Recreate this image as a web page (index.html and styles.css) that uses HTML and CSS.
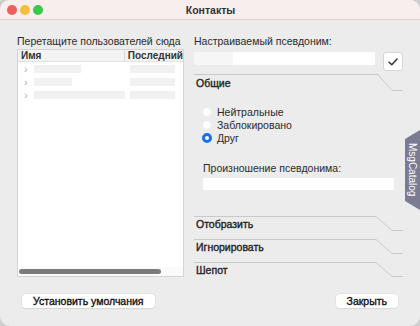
FILE: index.html
```html
<!DOCTYPE html>
<html>
<head>
<meta charset="utf-8">
<link rel="stylesheet" href="styles.css">
</head>
<body>
<div class="window">
  <div class="titlebar">
    <div class="lights">
      <span class="light red"></span>
      <span class="light yellow"></span>
      <span class="light green"></span>
    </div>
    <div class="title">Контакты</div>
  </div>
  <div class="content">
    <div class="main">
      <div class="left">
        <div class="label">Перетащите пользователей сюда</div>
        <div class="list">
          <div class="list-head">
            <div class="col-name">Имя</div>
            <div class="col-last">Последний</div>
          </div>
          <div class="row"><span class="chev">›</span><span class="bar b1"></span><span class="bar b4"></span></div>
          <div class="row"><span class="chev">›</span><span class="bar b2"></span><span class="bar b4"></span></div>
          <div class="row"><span class="chev">›</span><span class="bar b3"></span><span class="bar b4"></span></div>
          <div class="list-fill"></div>
          <div class="scroll"><span class="thumb"></span></div>
        </div>
      </div>
      <div class="right">
        <div class="label">Настраиваемый псевдоним:</div>
        <div class="alias-row">
          <div class="input alias"><span class="ph"></span></div>
          <div class="check">
            <svg width="10" height="8" viewBox="0 0 10 8"><path d="M1 4.2 L3.8 6.8 L9 1" fill="none" stroke="#333" stroke-width="1.5" stroke-linecap="round" stroke-linejoin="round"/></svg>
          </div>
        </div>
        <div class="tab first">
          <div class="tab-label">Общие</div>
          <svg class="tab-edge" width="28" height="17" viewBox="0 0 28 17"><path d="M0 0.5 L3 0.5 L17 16.5 L28 16.5" fill="none" stroke="#c9c9c9" stroke-width="1"/></svg>
        </div>
        <div class="general">
          <div class="radios">
            <div class="radio-row"><span class="radio"></span>Нейтральные</div>
            <div class="radio-row"><span class="radio"></span>Заблокировано</div>
            <div class="radio-row"><span class="radio on"></span>Друг</div>
          </div>
          <div class="label pron">Произношение псевдонима:</div>
          <div class="input pron-input"></div>
        </div>
        <div class="tab">
          <div class="tab-label">Отобразить</div>
          <svg class="tab-edge" width="28" height="15" viewBox="0 0 28 15"><path d="M0 0.5 L1 0.5 L17 14.5 L28 14.5" fill="none" stroke="#c9c9c9" stroke-width="1"/></svg>
        </div>
        <div class="tab">
          <div class="tab-label">Игнорировать</div>
          <svg class="tab-edge" width="28" height="15" viewBox="0 0 28 15"><path d="M0 0.5 L1 0.5 L17 14.5 L28 14.5" fill="none" stroke="#c9c9c9" stroke-width="1"/></svg>
        </div>
        <div class="tab">
          <div class="tab-label">Шепот</div>
          <svg class="tab-edge" width="28" height="15" viewBox="0 0 28 15"><path d="M0 0.5 L1 0.5 L17 14.5 L28 14.5" fill="none" stroke="#c9c9c9" stroke-width="1"/></svg>
        </div>
      </div>
    </div>
    <div class="buttons">
      <div class="btn">Установить умолчания</div>
      <div class="btn">Закрыть</div>
    </div>
  </div>
  <div class="side-tab"><span>MsgCatalog</span></div>
</div>
</body>
</html>
```

FILE: styles.css
```css
* { box-sizing: border-box; }
html, body { margin: 0; padding: 0; }
body {
  width: 420px;
  height: 326px;
  background: #cfcfcf;
  font-family: "Liberation Sans", Arial, sans-serif;
  font-size: 10.5px;
  color: #222;
  overflow: hidden;
}
.window {
  position: relative;
  width: 420px;
  height: 326px;
  background: #ececec;
  border-radius: 10px;
  overflow: hidden;
  display: flex;
  flex-direction: column;
}
.titlebar {
  height: 20px;
  background: #f8eeee;
  border-bottom: 1px solid #dcd6d6;
  display: flex;
  align-items: center;
  position: relative;
  flex-shrink: 0;
}
.lights {
  display: flex;
  gap: 3px;
  padding-left: 7px;
}
.light {
  width: 10px;
  height: 10px;
  border-radius: 50%;
  display: block;
}
.red { background: #ec5f5a; }
.yellow { background: #f5be3f; }
.green { background: #3ac84a; }
.title {
  flex: 1;
  text-align: center;
  font-weight: bold;
  font-size: 10.5px;
  color: #333;
  margin-right: 42px;
}
.content {
  flex: 1;
  display: flex;
  flex-direction: column;
  padding: 14px 17px 0 17px;
}
.main {
  display: flex;
  gap: 10px;
  height: 243px;
}
.left {
  width: 167px;
  display: flex;
  flex-direction: column;
}
.label {
  height: 15px;
  line-height: 15px;
  color: #2a2a2a;
  white-space: nowrap;
}
.list {
  flex: 1;
  background: #fff;
  border: 1px solid #d4d4d4;
  display: flex;
  flex-direction: column;
  overflow: hidden;
}
.list-head {
  display: flex;
  height: 12px;
  line-height: 12px;
  background: #f3f3f3;
  border-bottom: 1px solid #e2e2e2;
  font-weight: bold;
  font-size: 10px;
  color: #333;
}
.col-name {
  width: 111px;
  padding-left: 3px;
  border-right: 1px solid #d8d8d8;
}
.col-last {
  padding-left: 3px;
  white-space: nowrap;
}
.row {
  display: flex;
  align-items: center;
  height: 13px;
}
.chev {
  width: 16px;
  padding-left: 6px;
  color: #b0b0b0;
  font-size: 11px;
  line-height: 10px;
}
.bar {
  display: block;
  height: 8px;
  background: #f1f1f1;
}
.b1 { width: 47px; margin-right: 49px; }
.b2 { width: 38px; margin-right: 58px; }
.b3 { width: 91px; margin-right: 5px; }
.b4 { width: 45px; }
.list-fill { flex: 1; }
.scroll {
  height: 9px;
  padding: 2px 22px 2px 1px;
  background: #fafafa;
}
.thumb {
  display: block;
  height: 5px;
  border-radius: 3px;
  background: #7b7b7b;
}
.right {
  flex: 1;
  display: flex;
  flex-direction: column;
}
.alias-row {
  display: flex;
  align-items: flex-start;
  gap: 8px;
  margin-top: 3px;
  height: 20px;
}
.input {
  height: 13px;
  background: #fff;
}
.alias {
  width: 181px;
  display: flex;
}
.ph {
  display: block;
  width: 39px;
  background: #f6f6f6;
}
.check {
  width: 20px;
  height: 19px;
  background: #fff;
  border: 1px solid #d6d6d6;
  border-radius: 3px;
  display: flex;
  align-items: center;
  justify-content: center;
}
.tab {
  display: flex;
  height: 15px;
  margin-top: 8px;
}
.tab.first {
  margin-top: 2px;
  height: 17px;
}
.tab-label {
  width: 181px;
  border-top: 1px solid #c9c9c9;
  padding-left: 2px;
  line-height: 13px;
  font-size: 10.5px;
  color: #222;
  -webkit-text-stroke: 0.35px #222;
  padding-top: 1px;
}
.tab.first .tab-label { padding-top: 2px; }
.tab-edge { display: block; }
.general {
  padding-left: 9px;
  height: 117px;
}
.radios {
  padding-top: 14px;
  display: flex;
  flex-direction: column;
}
.radio-row {
  display: flex;
  align-items: center;
  height: 13px;
  gap: 5px;
  color: #2a2a2a;
}
.radio {
  width: 10px;
  height: 10px;
  border-radius: 50%;
  background: #fff;
  border: 1px solid #ececec;
  margin-left: -1px;
}
.radio.on {
  border: 3px solid #1d6fe5;
  background: #fff;
}
.pron {
  margin-top: 17px;
}
.pron-input {
  margin-top: 2px;
  width: 191px;
  height: 12px;
}
.buttons {
  display: flex;
  justify-content: space-between;
  padding: 17px 5px 0 5px;
}
.btn {
  height: 14px;
  line-height: 14px;
  background: #fff;
  border-radius: 4px;
  box-shadow: 0 0 0 0.5px #d8d8d8, 0 1px 1px rgba(0,0,0,0.08);
  padding: 0 11px;
  font-size: 10.5px;
  color: #111;
  -webkit-text-stroke: 0.35px #111;
}
.side-tab {
  position: absolute;
  right: 0;
  top: 130px;
  width: 15px;
  height: 80px;
  background: #7b7b94;
  clip-path: polygon(0 9px, 100% 0, 100% 100%, 0 calc(100% - 9px));
  display: flex;
  align-items: center;
  justify-content: center;
}
.side-tab span {
  writing-mode: vertical-rl;
  color: #fff;
  font-size: 10px;
  white-space: nowrap;
}
```
